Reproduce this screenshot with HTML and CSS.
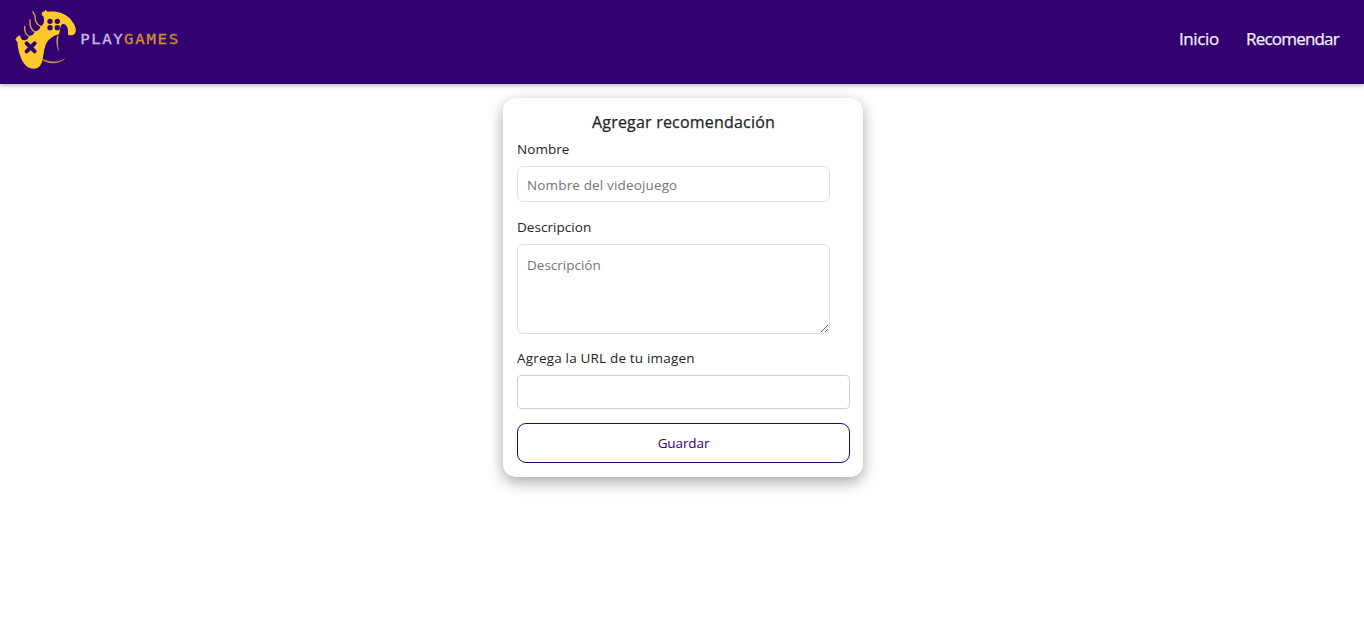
FILE: index.html
```html
<!DOCTYPE html>
<html lang="es">
<head>
<meta charset="utf-8">
<title>PlayGames</title>
<link rel="stylesheet" href="styles.css">
</head>
<body>
<header class="header">
  <a class="logo">
    <svg width="190" height="80" viewBox="0 0 570 240" role="img" aria-label="PlayGames">
      <path class="logo-pad" d="M46 119 L51 111 L60 106 C62 115 65 121 73 121 C81 120 86 115 87 108 C96 108 103 103 104 94 C113 94 120 88 121 78 C130 77 134 66 131 51 L125 44 L126 37 L134 34 L136 29 L143 35 C170 32 194 39 209 55 C222 69 230 86 227 95 C224 106 213 108 204 104 C206 87 201 72 189 72 C178 75 182 91 177 103 C157 108 143 119 137 135 C128 159 131 187 119 199 C109 210 91 208 79 198 C64 184 54 155 52 126 Z"/>
      <path class="logo-claws" d="M74 79 C73 94 77 105 88 109 M90 60 C89 77 94 91 105 95 M99 36 C101 42 105 43 105 49 C105 64 111 75 122 79"/>
      <path class="logo-line" d="M171 109 C168 126 170 139 176 153 C173 138 173 121 175 107 Z M126 179 C147 193 176 193 194 176 C177 188 149 188 128 177 Z"/>
      <g class="logo-hole">
        <circle cx="150" cy="64" r="8"/><circle cx="172" cy="64" r="8"/>
        <circle cx="150" cy="83" r="8"/><circle cx="172" cy="83" r="8"/>
      </g>
      <path class="logo-cross" d="M80 130 L104 154 M104 130 L80 154"/>
      <text class="logo-text" transform="translate(241 131) scale(1.18 1)"><tspan class="play" x="0" textLength="108" lengthAdjust="spacing">PLAY</tspan><tspan class="games" x="111" textLength="138" lengthAdjust="spacing">GAMES</tspan></text>
    </svg>
  </a>
  <nav class="nav"><a class="nav-home">Inicio</a><a class="nav-rec">Recomendar</a></nav>
</header>
<main class="main">
  <form class="card">
    <h1 class="title"><span>Agregar recomendación</span></h1>
    <label class="label" for="name">Nombre</label>
    <input class="field" id="name" type="text" placeholder="Nombre del videojuego">
    <label class="label" for="desc">Descripcion</label>
    <textarea class="field area" id="desc" placeholder="Descripción"></textarea>
    <label class="label url-label" for="url">Agrega la URL de tu imagen</label>
    <input class="url" id="url" type="text">
    <button class="save" type="button">Guardar</button>
  </form>
</main>
</body>
</html>
```
FILE: styles.css
```css
* { box-sizing: border-box; }
body { min-height: 620px; margin: 0; background: #fff; color: #212529; font-family: "Open Sans", "Noto Sans", sans-serif; }
.header { height: 84px; display: flex; justify-content: space-between; background: #330072; box-shadow: 0 2px 4px rgba(44, 62, 58, .32); }
.logo { display: block; height: 80px; }
.logo svg { display: block; }
.logo-pad { fill: #fdc92f; }
.logo-claws { fill: none; stroke: #dda843; stroke-width: 4; stroke-linecap: round; }
.logo-line { fill: #c99546; stroke: #c99546; stroke-width: 1; }
.logo-hole { fill: #330072; }
.logo-cross { fill: none; stroke: #330072; stroke-width: 12; stroke-linecap: round; }
.logo-text { font-family: "DejaVu Sans Mono", monospace; font-size: 40px; stroke-width: 1; }
.play { fill: #c5b6e2; stroke: #c5b6e2; }
.games { fill: #c98d32; stroke: #c98d32; }
.nav { display: flex; gap: 27px; padding: 27px 25px 0 0; color: #f3effa; font-size: 17px; line-height: 24px; -webkit-text-stroke: .25px #f3effa; }
.nav-home { width: 40px; letter-spacing: -.4px; }
.nav-rec { width: 93px; letter-spacing: -.8px; }
.main { display: flex; padding: 14px 0 24px 503px; }
.card { display: flex; flex-direction: column; width: 360px; height: 379px; padding: 14px 13px 14px 14px; border-radius: 13px; background: #fff; box-shadow: 0 5px 15px rgba(0, 0, 0, .35); }
.card > * { flex-shrink: 0; }
.title { margin: 0; text-align: center; font-size: 16px; line-height: 20px; font-weight: 500; letter-spacing: .2px; -webkit-text-stroke: .25px #212529; }
.label { height: 20px; margin: 7px 0 7px; font-size: 13.5px; line-height: 20px; letter-spacing: .05px; }
.url-label { margin-top: 6px; letter-spacing: .18px; }
.field { width: 313px; height: 36px; margin: 0 0 8px; padding: 2px 9px 0; border: 1px solid #dee0e1; border-radius: 6px; background: #fff; font: 13.5px "Open Sans", "Noto Sans", sans-serif; letter-spacing: .15px; outline: 0; }
.field::placeholder { color: #757575; }
.area { height: 90px; padding-top: 11px; letter-spacing: 0; resize: both; }
.url { height: 34px; margin: 0; padding: 6px; border: 1px solid #ced1dd; border-radius: 4px; }
.save { height: 40px; margin-top: 14px; padding: 0; border: 1px solid #330072; border-radius: 9px; background: #fff; color: #330072; font: 13.5px "Open Sans", "Noto Sans", sans-serif; letter-spacing: -.1px; }
```
